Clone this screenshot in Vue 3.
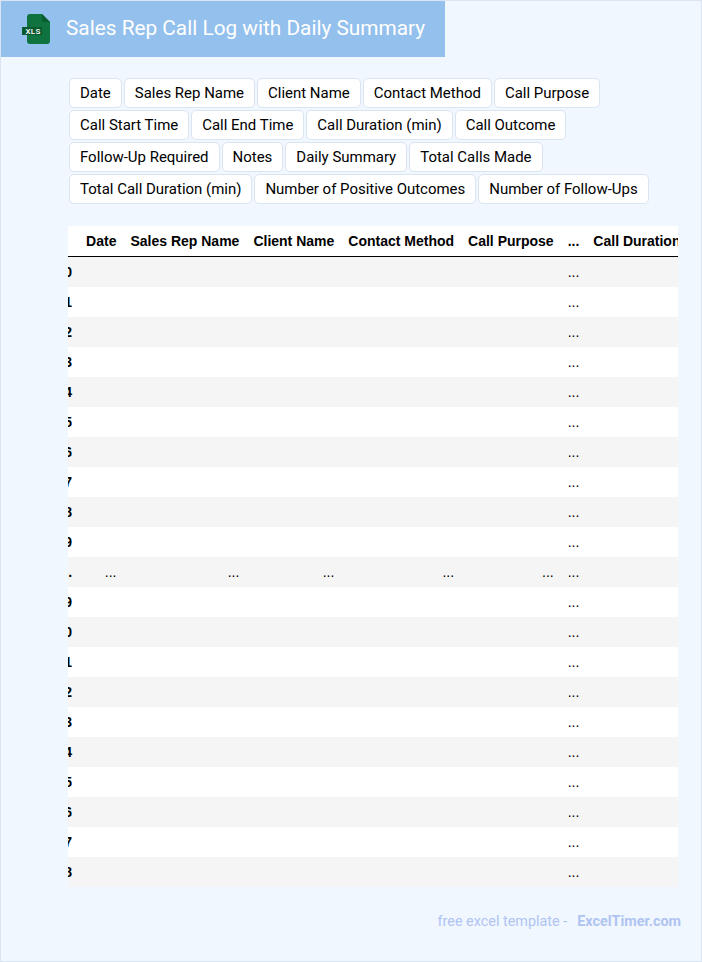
<script setup>
const tags = ['Date','Sales Rep Name','Client Name','Contact Method','Call Purpose','Call Start Time','Call End Time','Call Duration (min)','Call Outcome','Follow-Up Required','Notes','Daily Summary','Total Calls Made','Total Call Duration (min)','Number of Positive Outcomes','Number of Follow-Ups']
const heads = ['', 'Date','Sales Rep Name','Client Name','Contact Method','Call Purpose','...','Call Duration (min)']
const idx = ['0','1','2','3','4','5','6','7','8','9','...','29','30','31','32','33','34','35','36','37','38']
const rows = idx.map((i) => ({ i, mid: i === '...' }))
</script>

<template>
  <div class="page">
    <header class="banner">
      <svg class="logo" width="30" height="32" viewBox="0 1 30 32" aria-hidden="true">
        <path d="M9 2h12l8 8v19a3 3 0 0 1-3 3H9a3 3 0 0 1-3-3V5a3 3 0 0 1 3-3z" fill="#0f7340"/>
        <path d="M21 2l8 8h-6a2 2 0 0 1-2-2z" fill="#0b5c30"/>
        <rect x="1" y="15" width="20" height="8" fill="#0a5a2f"/>
        <text x="12" y="22" text-anchor="middle" class="logo-text">XLS</text>
      </svg>
      <h1>Sales Rep Call Log with Daily Summary</h1>
    </header>

    <div class="tags">
      <span v-for="t in tags" :key="t" class="tag">{{ t }}</span>
    </div>

    <div class="table-clip">
      <table>
        <thead>
          <tr><th v-for="(h, n) in heads" :key="n">{{ h }}</th></tr>
        </thead>
        <tbody>
          <tr v-for="r in rows" :key="r.i">
            <th>{{ r.i }}</th>
            <td>{{ r.mid ? '...' : '' }}</td>
            <td>{{ r.mid ? '...' : '' }}</td>
            <td>{{ r.mid ? '...' : '' }}</td>
            <td>{{ r.mid ? '...' : '' }}</td>
            <td>{{ r.mid ? '...' : '' }}</td>
            <td>...</td>
            <td></td>
          </tr>
        </tbody>
      </table>
    </div>

    <footer class="foot">
      <span>free excel template -</span>
      <strong>ExcelTimer.com</strong>
    </footer>
  </div>
</template>

<style>
html, body { margin: 0; padding: 0; background: #f0f7ff; }
</style>

<style scoped>
.page {
  box-sizing: border-box;
  width: 702px;
  height: 962px;
  background: #f0f7ff;
  border: 1px solid #dbe5f1;
  font-family: Roboto, sans-serif;
}
.banner {
  display: flex;
  align-items: center;
  width: 444px;
  height: 56px;
  background: #93c0ec;
  box-sizing: border-box;
  padding-left: 20px;
}
.logo { flex: none; display: block; margin-right: 15px; }
.logo-text {
  font-family: Roboto, sans-serif;
  font-size: 8px;
  font-weight: 500;
  fill: #ffffff;
  letter-spacing: 0.3px;
}
h1 {
  margin: 0 0 2px;
  font-size: 20.8px;
  font-weight: 400;
  color: #ffffff;
  white-space: nowrap;
}
.tags {
  display: flex;
  flex-wrap: wrap;
  gap: 2px;
  width: 600px;
  margin: 21px 0 0 68px;
}
.tag {
  box-sizing: border-box;
  height: 30px;
  padding: 0 10px;
  line-height: 28px;
  font-size: 14.97px;
  color: #000;
  background: #fff;
  border: 1px solid #dbe5f1;
  border-radius: 5px;
  white-space: nowrap;
}
.table-clip {
  width: 610px;
  margin: 22px 0 0 67px;
  overflow: hidden;
  background: #fff;
}
table {
  border-collapse: separate;
  border-spacing: 0;
  margin-left: -18.5px;
  font-family: "Liberation Sans", Arial, sans-serif;
  font-size: 14px;
  color: #000;
  white-space: nowrap;
}
thead tr { height: 31px; }
thead th { border-bottom: 1px solid #000; }
th, td {
  padding: 0 7px;
  text-align: right;
  font-weight: 400;
}
th { font-weight: 700; }
tbody tr { height: 30px; background: #fff; }
tbody tr:nth-child(odd) { background: #f5f5f5; }
.foot {
  display: flex;
  justify-content: flex-end;
  gap: 10px;
  width: 680px;
  margin-top: 26px;
  font-size: 14.4px;
  color: #b0c4f2;
}
.foot strong { font-weight: 700; }
</style>
